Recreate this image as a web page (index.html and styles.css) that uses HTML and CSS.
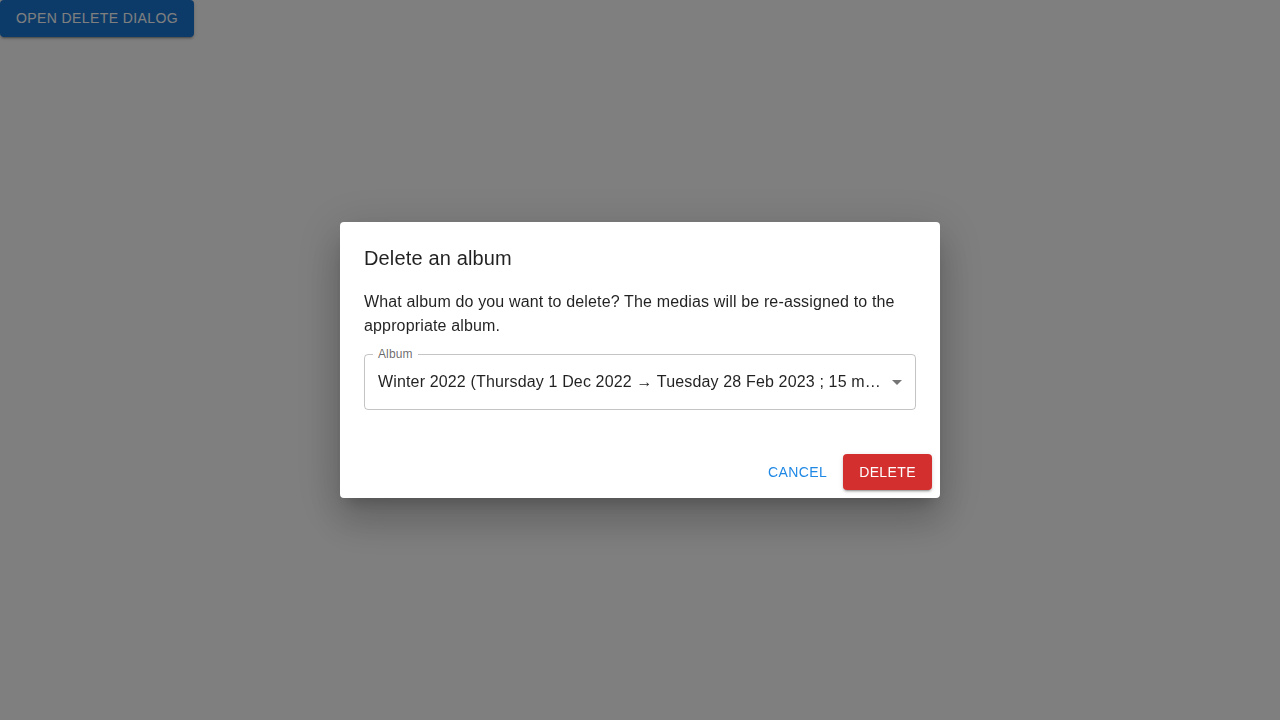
FILE: index.html
```html
<!DOCTYPE html>
<html lang="en">
<head>
<meta charset="utf-8">
<title>Delete an album</title>
<link rel="stylesheet" href="styles.css">
</head>
<body>
  <button class="btn btn-contained btn-primary">Open delete dialog</button>

  <div class="backdrop"></div>
  <div class="dialog-container">
    <div class="dialog" role="dialog">
      <h2 class="dialog-title">Delete an album</h2>
      <div class="dialog-content">
        <p class="dialog-text">What album do you want to delete? The medias will be re-assigned to the appropriate album.</p>
        <div class="select-field">
          <span class="select-label">Album</span>
          <div class="select-value">Winter 2022 (Thursday 1 Dec 2022 → Tuesday 28 Feb 2023 ; 15 medias)</div>
          <svg class="select-icon" viewBox="0 0 24 24" width="24" height="24"><path d="M7 10l5 5 5-5z"/></svg>
        </div>
      </div>
      <div class="dialog-actions">
        <button class="btn btn-text">Cancel</button>
        <button class="btn btn-contained btn-error">Delete</button>
      </div>
    </div>
  </div>
</body>
</html>
```

FILE: styles.css
```css
html, body {
  margin: 0;
  padding: 0;
  height: 100%;
}

body {
  background: #ffffff;
  font-family: "Liberation Sans", Arial, Helvetica, sans-serif;
  color: rgba(0, 0, 0, 0.87);
}

.btn {
  font-family: "Liberation Sans", Arial, Helvetica, sans-serif;
  font-size: 14px;
  font-weight: 500;
  line-height: 1.75;
  letter-spacing: 0.02857em;
  text-transform: uppercase;
  border: 0;
  border-radius: 4px;
  padding: 6px 16px;
  min-width: 64px;
  cursor: pointer;
  background: transparent;
}

.btn-contained {
  color: #ffffff;
  box-shadow: 0 3px 1px -2px rgba(0, 0, 0, 0.2), 0 2px 2px 0 rgba(0, 0, 0, 0.14), 0 1px 5px 0 rgba(0, 0, 0, 0.12);
}

.btn-primary {
  background: #1976d2;
}

.btn-error {
  background: #d32f2f;
}

.btn-text {
  color: #1e88e5;
  padding: 6px 8px;
}

.backdrop {
  position: fixed;
  inset: 0;
  background: rgba(0, 0, 0, 0.5);
}

.dialog-container {
  position: fixed;
  inset: 0;
  display: flex;
  align-items: center;
  justify-content: center;
}

.dialog {
  width: 600px;
  background: #ffffff;
  border-radius: 4px;
  box-shadow: 0 11px 15px -7px rgba(0, 0, 0, 0.2), 0 24px 38px 3px rgba(0, 0, 0, 0.14), 0 9px 46px 8px rgba(0, 0, 0, 0.12);
  display: flex;
  flex-direction: column;
}

.dialog-title {
  margin: 0;
  padding: 20px 24px 0;
  font-size: 20px;
  font-weight: 500;
  line-height: 32px;
  letter-spacing: 0.0075em;
  color: rgba(0, 0, 0, 0.87);
}

.dialog-content {
  padding: 16px 24px 28px;
}

.dialog-text {
  margin: 0;
  font-size: 16px;
  line-height: 1.5;
  letter-spacing: 0.00938em;
  color: rgba(0, 0, 0, 0.87);
}

.select-field {
  position: relative;
  margin: 16px 0 8px;
  border: 1px solid rgba(0, 0, 0, 0.23);
  border-radius: 4px;
  display: flex;
  align-items: center;
}

.select-label {
  position: absolute;
  left: 8px;
  top: -8px;
  padding: 0 5px;
  background: #ffffff;
  font-size: 12px;
  line-height: 15px;
  letter-spacing: 0.00938em;
  color: rgba(0, 0, 0, 0.6);
}

.select-value {
  flex: 1;
  min-width: 0;
  padding: 15.5px 32px 15.5px 13px;
  height: 23px;
  font-size: 16px;
  line-height: 23px;
  letter-spacing: 0.00938em;
  color: rgba(0, 0, 0, 0.87);
  white-space: nowrap;
  overflow: hidden;
  text-overflow: ellipsis;
}

.select-icon {
  position: absolute;
  right: 6px;
  top: 50%;
  margin-top: -12px;
  fill: rgba(0, 0, 0, 0.54);
}

.dialog-actions {
  display: flex;
  justify-content: flex-end;
  align-items: center;
  gap: 8px;
  padding: 8px;
}
```
